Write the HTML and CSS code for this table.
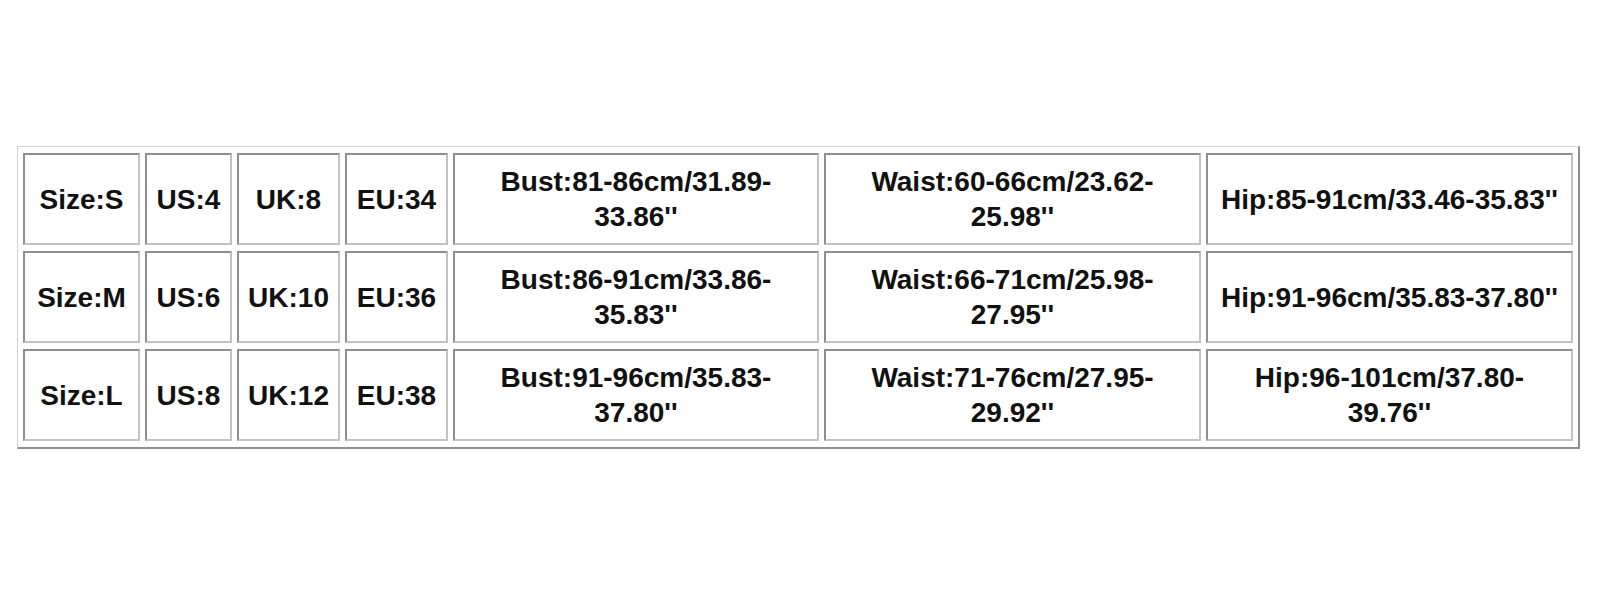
FILE: index.html
```html
<!DOCTYPE html>
<html lang="en">
<head>
<meta charset="utf-8">
<title>Size chart</title>
<link rel="stylesheet" href="styles.css">
</head>
<body>
<div class="chart">
  <div class="cell">Size:S</div>
  <div class="cell">US:4</div>
  <div class="cell">UK:8</div>
  <div class="cell">EU:34</div>
  <div class="cell">Bust:81-86cm/31.89-33.86''</div>
  <div class="cell">Waist:60-66cm/23.62-25.98''</div>
  <div class="cell">Hip:85-91cm/33.46-35.83''</div>

  <div class="cell">Size:M</div>
  <div class="cell">US:6</div>
  <div class="cell">UK:10</div>
  <div class="cell">EU:36</div>
  <div class="cell">Bust:86-91cm/33.86-35.83''</div>
  <div class="cell">Waist:66-71cm/25.98-27.95''</div>
  <div class="cell">Hip:91-96cm/35.83-37.80''</div>

  <div class="cell">Size:L</div>
  <div class="cell">US:8</div>
  <div class="cell">UK:12</div>
  <div class="cell">EU:38</div>
  <div class="cell">Bust:91-96cm/35.83-37.80''</div>
  <div class="cell">Waist:71-76cm/27.95-29.92''</div>
  <div class="cell">Hip:96-101cm/37.80-39.76''</div>
</div>
</body>
</html>
```
FILE: styles.css
```css
html, body {
  margin: 0;
  padding: 0;
  background: #ffffff;
}

body {
  font-family: "Liberation Sans", Arial, sans-serif;
  color: #111111;
}

.chart {
  margin: 146px 0 0 17px;
  width: max-content;
  display: grid;
  grid-template-columns: 117px 87px 103px 103px 366px 377px 367px;
  grid-auto-rows: 92px;
  column-gap: 5px;
  row-gap: 6px;
  padding: 6px 5px;
  border-style: solid;
  border-width: 1px 2px 2px 1px;
  border-color: #d2d2d2 #8f8f8f #8f8f8f #d2d2d2;
}

.cell {
  box-sizing: border-box;
  display: flex;
  align-items: center;
  justify-content: center;
  text-align: center;
  padding: 0 10px;
  border: 2px solid;
  border-color: #8e8e8e #c2c2c2 #c2c2c2 #8e8e8e;
  font-size: 28px;
  font-weight: bold;
  line-height: 35px;
}
```
